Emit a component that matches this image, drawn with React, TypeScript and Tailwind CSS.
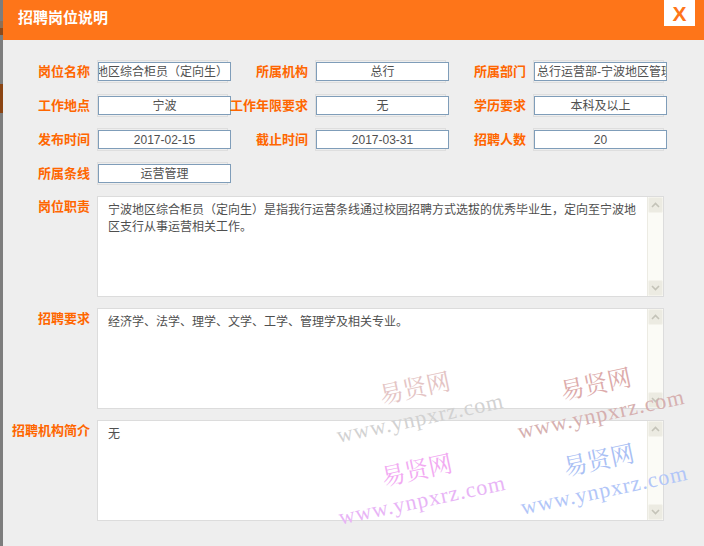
import type { ReactNode } from "react";

const font = { fontFamily: '"Liberation Sans", "Noto Sans CJK SC", sans-serif' };

const labelCls =
  "pr-[7px] text-right text-[13px] leading-[17px] font-bold text-[#ff6600] whitespace-nowrap";

function Field({ children, className = "justify-center" }: { children: ReactNode; className?: string }) {
  return (
    <div className="h-[23px] w-[131px] border border-[#dedede] pt-px">
      <div
        className={
          "flex h-[19px] w-[133px] items-center overflow-hidden whitespace-nowrap border border-[#7f9db9] bg-white px-[2px] text-[12px] text-[#4f4f4f] " +
          className
        }
      >
        {children}
      </div>
    </div>
  );
}

function Chevron({ up }: { up?: boolean }) {
  return (
    <svg width="9" height="6" viewBox="0 0 9 6" className="block">
      <path
        d={up ? "M1 5 L4.5 1.5 L8 5" : "M1 1 L4.5 4.5 L8 1"}
        fill="none"
        stroke="#c4c3b8"
        strokeWidth="1.6"
      />
    </svg>
  );
}

function Scrollbar() {
  return (
    <div className="flex w-[16px] flex-col justify-between border-l border-[#ecebe3] bg-[#fbfbf6]">
      <div className="flex h-[16px] items-center justify-center rounded-[2px] border border-[#f4f3ec] bg-[#ecebe2]">
        <Chevron up />
      </div>
      <div className="flex h-[16px] items-center justify-center rounded-[2px] border border-[#f4f3ec] bg-[#ecebe2]">
        <Chevron />
      </div>
    </div>
  );
}

function Area({ lines }: { lines: string[] }) {
  return (
    <div className="col-span-5 flex h-[101px] border border-[#dcdcdc] bg-white">
      <div className="flex-1 pl-[10px] pt-[5px] text-[12px] leading-[17px] text-[#4f4f4f]">
        {lines.map((l) => (
          <div key={l} className="whitespace-nowrap">
            {l}
          </div>
        ))}
      </div>
      <Scrollbar />
    </div>
  );
}

const marks = [
  { left: 332, top: 373, cn: "text-[#e4c4c4]", en: "text-[#d2d2d2]" },
  { left: 513, top: 369, cn: "text-[#dcaaaa]", en: "text-[#d6b0b0]" },
  { left: 334, top: 455, cn: "text-[#f2aaf2]", en: "text-[#e8b4f6]" },
  { left: 516, top: 445, cn: "text-[#a9c0f4]", en: "text-[#b2c6f8]" },
];

export default function App() {
  return (
    <div className="relative flex h-[546px] w-[704px] overflow-hidden bg-[#eeeeee]" style={font}>
      {/* left edge of the page behind the dialog */}
      <div className="flex w-[3px] flex-col bg-[#7d7d7d]">
        <div className="h-[21px]" />
        <div className="h-[7px] bg-[#8c7058]" />
        <div className="h-[7px] bg-[#8b4a1c]" />
        <div className="h-[49px]" />
        <div className="h-[29px] bg-[#8b4513]" />
      </div>

      <div className="flex flex-1 flex-col">
        <div className="flex h-[40px] items-start justify-between bg-[#fe7519]">
          <div className="flex h-[37px] items-center pl-[15px] text-[15px] font-bold text-white">
            招聘岗位说明
          </div>
          <div className="mr-[9px] flex h-[26px] w-[31px] items-center justify-center bg-white text-[21px] font-bold leading-none text-[#fe7519]">
            X
          </div>
        </div>

        <div className="grid grid-cols-[94px_131px_87px_131px_87px_131px] items-center gap-y-[11px] pt-[20px]">
          <div className={labelCls}>岗位名称</div>
          <Field className="justify-end">宁波地区综合柜员（定向生）</Field>
          <div className={labelCls}>所属机构</div>
          <Field>总行</Field>
          <div className={labelCls}>所属部门</div>
          <Field className="justify-start">总行运营部-宁波地区管理部</Field>

          <div className={labelCls}>工作地点</div>
          <Field>宁波</Field>
          <div className={labelCls}>工作年限要求</div>
          <Field>无</Field>
          <div className={labelCls}>学历要求</div>
          <Field>本科及以上</Field>

          <div className={labelCls}>发布时间</div>
          <Field>2017-02-15</Field>
          <div className={labelCls}>截止时间</div>
          <Field>2017-03-31</Field>
          <div className={labelCls}>招聘人数</div>
          <Field>20</Field>

          <div className={labelCls}>所属条线</div>
          <Field>运营管理</Field>
          <div className="col-span-4" />

          <div className={labelCls + " self-start pt-[2px]"}>岗位职责</div>
          <Area
            lines={[
              "宁波地区综合柜员（定向生）是指我行运营条线通过校园招聘方式选拔的优秀毕业生，定向至宁波地",
              "区支行从事运营相关工作。",
            ]}
          />

          <div className={labelCls + " self-start pt-[2px]"}>招聘要求</div>
          <Area lines={["经济学、法学、理学、文学、工学、管理学及相关专业。"]} />

          <div className={labelCls + " self-start pt-[2px]"}>招聘机构简介</div>
          <Area lines={["无"]} />
        </div>
      </div>

      {/* watermarks */}
      {marks.map((m) => (
        <div
          key={m.left + "-" + m.top}
          className="pointer-events-none absolute w-[176px] -rotate-12"
          style={{
            left: m.left,
            top: m.top,
            fontFamily: '"Liberation Serif", "Noto Serif CJK SC", "Noto Sans CJK SC", serif',
          }}
        >
          <div className={"pl-[50px] text-[24px] leading-[30px] " + m.cn}>易贤网</div>
          <div className={"text-[22px] leading-[30px] tracking-[1px] " + m.en}>www.ynpxrz.com</div>
        </div>
      ))}
    </div>
  );
}
